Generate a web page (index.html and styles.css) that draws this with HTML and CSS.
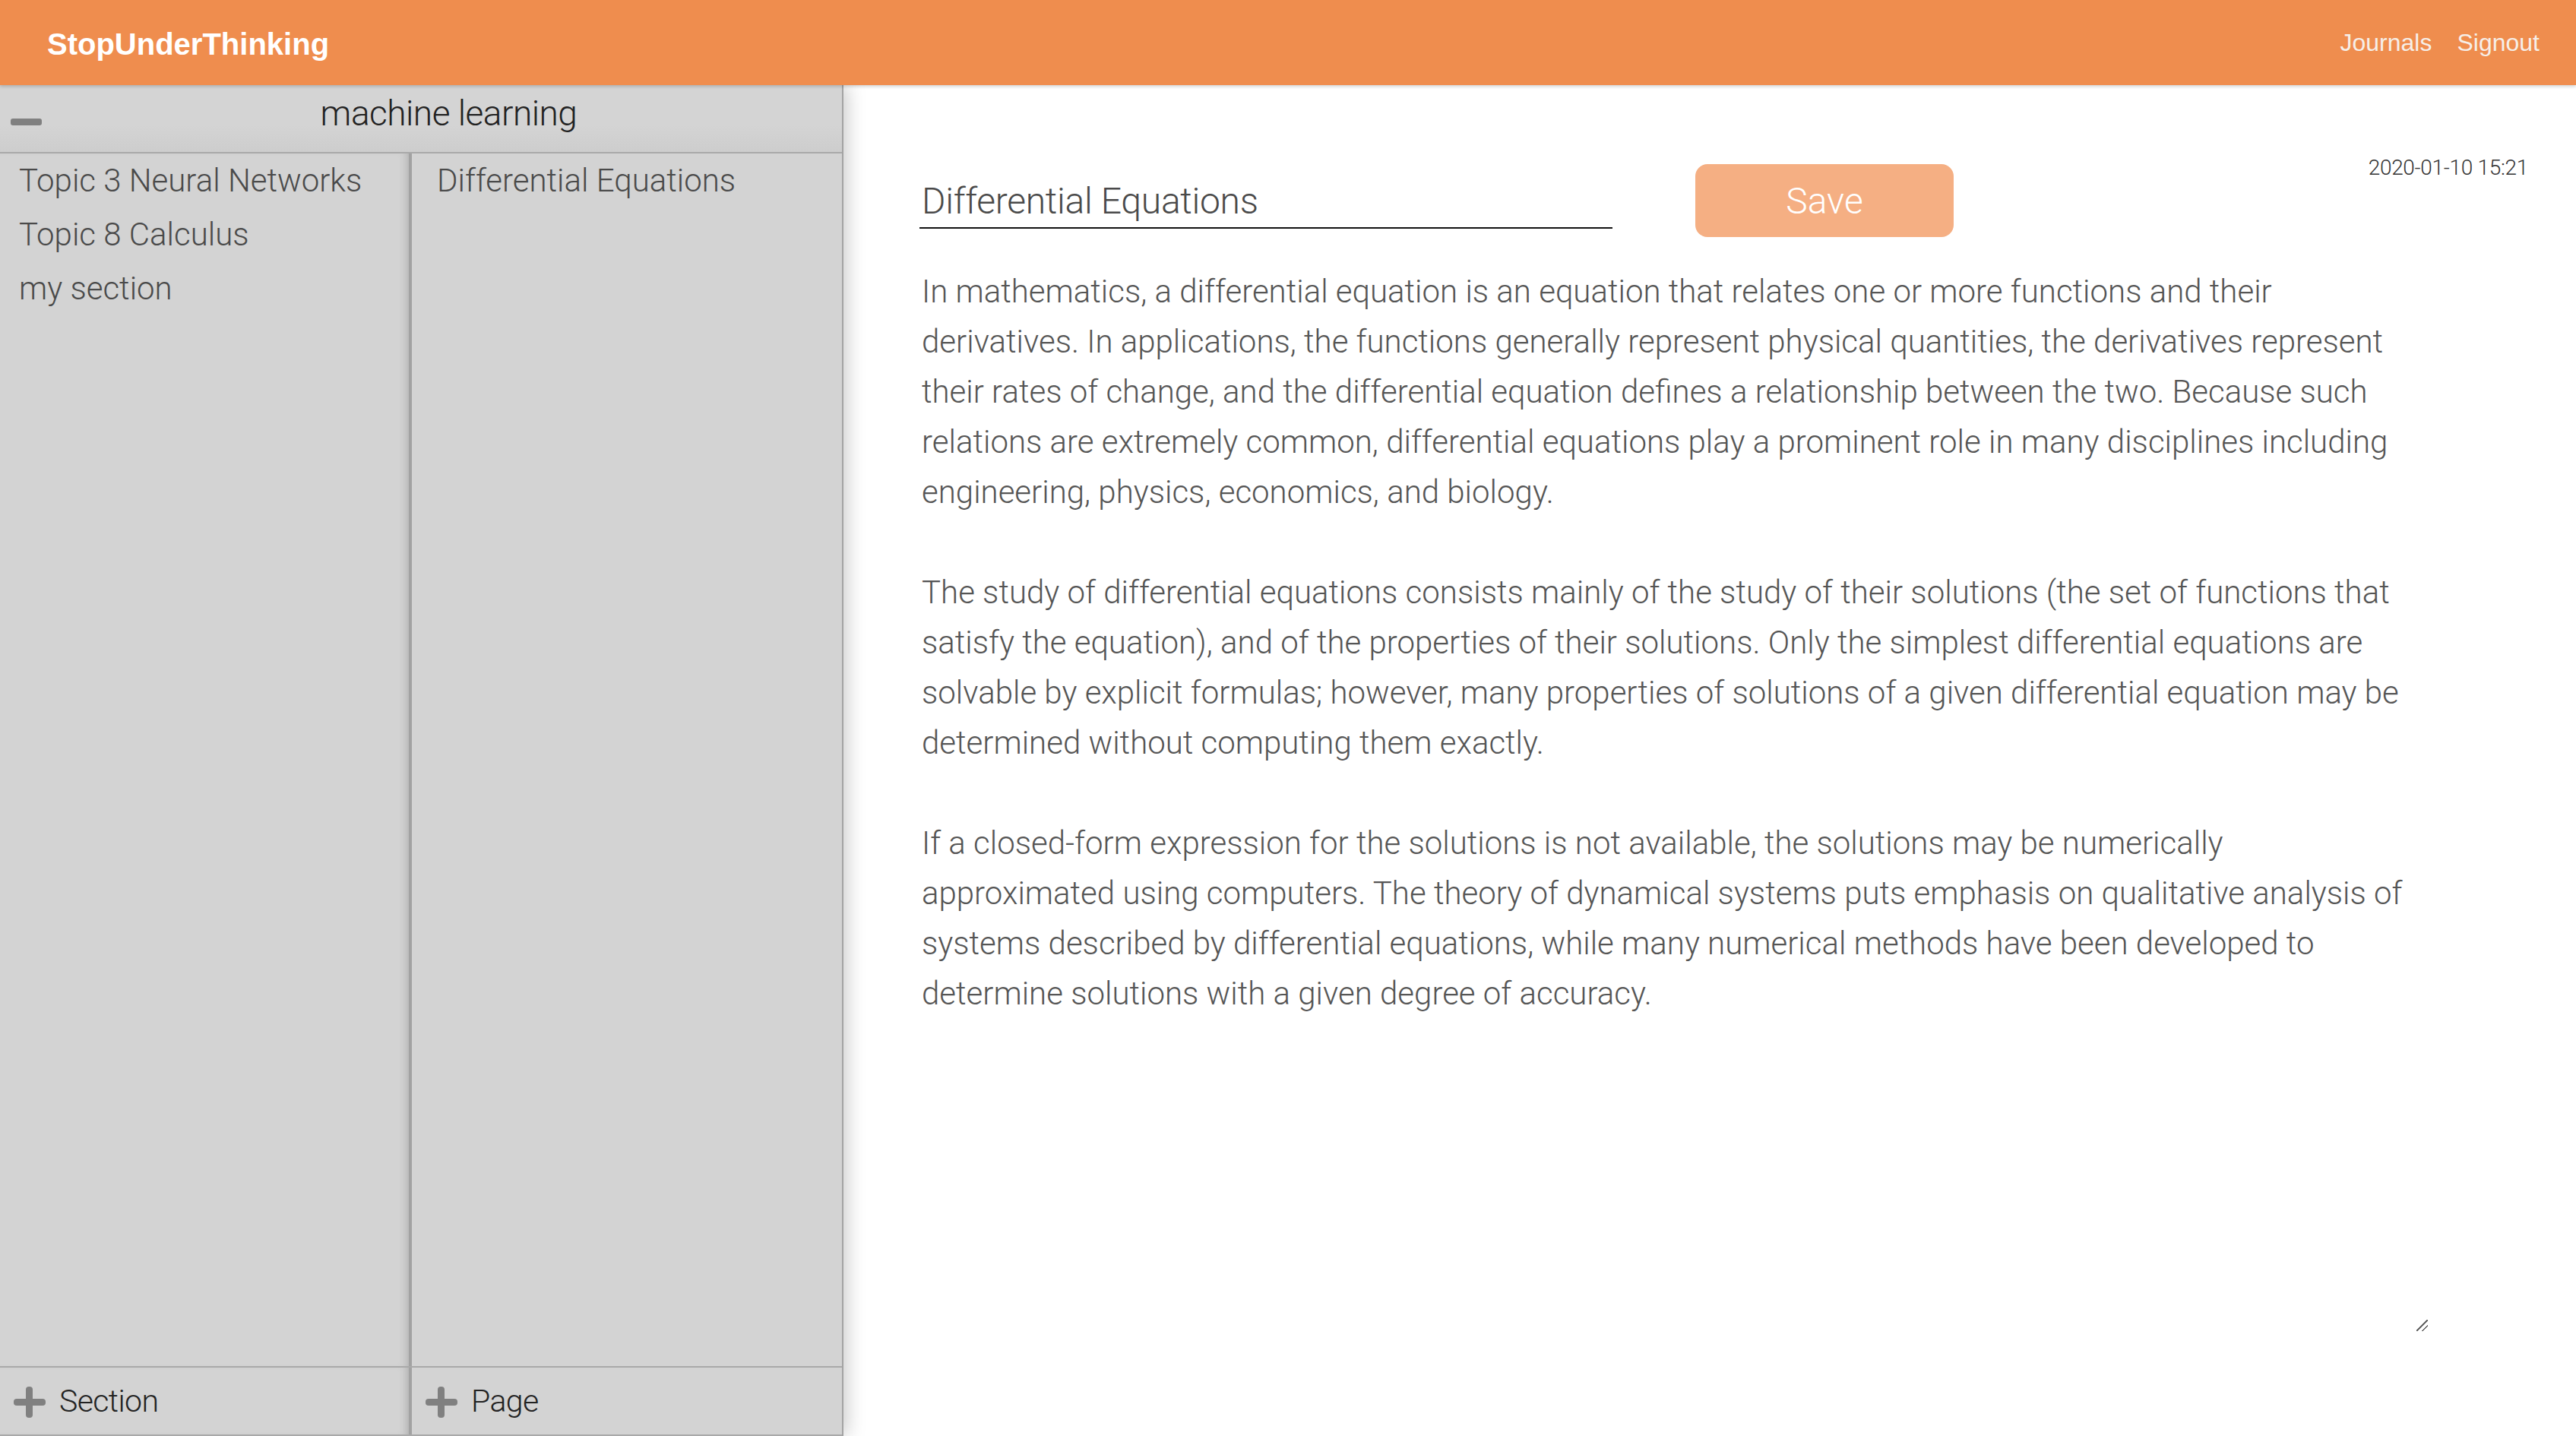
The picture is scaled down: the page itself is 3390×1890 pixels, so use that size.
FILE: index.html
```html
<!DOCTYPE html>
<html lang="en">
<head>
<meta charset="utf-8">
<title>StopUnderThinking</title>
<link rel="stylesheet" href="styles.css">
</head>
<body>
<header class="topbar">
  <div class="logo">StopUnderThinking</div>
  <nav class="nav">
    <a class="nav-link" href="#">Journals</a>
    <a class="nav-link" href="#">Signout</a>
  </nav>
</header>
<div class="app">
  <aside class="sidebar">
    <div class="sidebar-head">
      <span class="minus"></span>
      <span class="journal-title">machine learning</span>
    </div>
    <div class="cols">
      <ul class="col col-sections">
        <li class="item">Topic 3 Neural Networks</li>
        <li class="item">Topic 8 Calculus</li>
        <li class="item">my section</li>
      </ul>
      <ul class="col col-pages">
        <li class="item">Differential Equations</li>
      </ul>
    </div>
    <div class="adds">
      <button class="add add-section"><span class="plus"></span><span class="add-label">Section</span></button>
      <button class="add add-page"><span class="plus"></span><span class="add-label">Page</span></button>
    </div>
  </aside>
  <main class="editor">
    <div class="title-row">
      <input class="title-input" type="text" value="Differential Equations">
      <button class="save">Save</button>
      <div class="date">2020-01-10 15:21</div>
    </div>
    <textarea class="body-text" spellcheck="false">In mathematics, a differential equation is an equation that relates one or more functions and their
derivatives. In applications, the functions generally represent physical quantities, the derivatives represent
their rates of change, and the differential equation defines a relationship between the two. Because such
relations are extremely common, differential equations play a prominent role in many disciplines including
engineering, physics, economics, and biology.

The study of differential equations consists mainly of the study of their solutions (the set of functions that
satisfy the equation), and of the properties of their solutions. Only the simplest differential equations are
solvable by explicit formulas; however, many properties of solutions of a given differential equation may be
determined without computing them exactly.

If a closed-form expression for the solutions is not available, the solutions may be numerically
approximated using computers. The theory of dynamical systems puts emphasis on qualitative analysis of
systems described by differential equations, while many numerical methods have been developed to
determine solutions with a given degree of accuracy.</textarea>
  </main>
</div>
</body>
</html>
```
FILE: styles.css
```css
* { box-sizing: border-box; }
html, body { margin: 0; padding: 0; height: 100%; }
body {
  display: flex;
  flex-direction: column;
  height: 1890px;
  overflow: hidden;
  font-family: Roboto, "Liberation Sans", sans-serif;
  font-weight: 300;
  background: #fff;
}
.topbar {
  height: 112px;
  flex: 0 0 112px;
  background: #ef8d4e;
  display: flex;
  align-items: center;
  justify-content: space-between;
  padding: 0 48px 0 62px;
  box-shadow: 0 2px 4px rgba(0,0,0,0.18);
  position: relative;
  z-index: 3;
}
.logo {
  font-family: "Liberation Sans", Arial, sans-serif;
  font-weight: 700;
  font-size: 40px;
  color: #fff;
  letter-spacing: 0;
  margin-top: 4px;
}
.nav { display: flex; gap: 33px; margin-top: 0; }
.nav-link {
  font-family: "Liberation Sans", Arial, sans-serif;
  font-weight: 400;
  font-size: 32px;
  color: #f6efe9;
  text-decoration: none;
}
.app { flex: 1; display: flex; min-height: 0; }
.sidebar {
  width: 1110px;
  flex: 0 0 1110px;
  background: #d3d3d3;
  display: flex;
  flex-direction: column;
  border-right: 2px solid #a3a3a3;
  box-shadow: 4px 0 24px rgba(0,0,0,0.22);
  position: relative;
  z-index: 2;
}
.sidebar-head {
  height: 90px;
  flex: 0 0 90px;
  display: flex;
  align-items: center;
  border-bottom: 2px solid #a9a9a9;
  background: linear-gradient(#d4d4d4 60%, #cdcdcd);
}
.minus {
  width: 41px;
  height: 9px;
  border-radius: 3px;
  background: #808080;
  margin-left: 14px;
  margin-top: 8px;
}
.journal-title {
  flex: 1;
  text-align: center;
  font-size: 46px;
  color: #222;
  padding-left: 18px;
  padding-right: 0;
  margin-top: -14px;
  letter-spacing: -0.5px;
}
.cols { flex: 1; display: flex; min-height: 0; }
.col {
  list-style: none;
  margin: 0;
  padding: 0;
}
.col-sections {
  width: 538px;
  flex: 0 0 538px;
  padding-left: 25px;
  box-shadow: inset -10px 0 12px -8px rgba(0,0,0,0.18);
}
.col-pages {
  flex: 1;
  border-left: 4px solid #a2a2a2;
  padding-left: 33px;
}
.item {
  font-size: 42px;
  line-height: 71px;
  color: #4a4a4a;
  letter-spacing: 0;
  white-space: nowrap;
}
.adds {
  height: 92px;
  flex: 0 0 92px;
  display: flex;
  border-top: 2px solid #a9a9a9;
  border-bottom: 2px solid #a9a9a9;
}
.add {
  display: flex;
  align-items: center;
  border: 0;
  background: #d3d3d3;
  padding: 0 0 0 18px;
  margin: 0;
  font-family: inherit;
  font-weight: 300;
  font-size: 41px;
  color: #222;
  cursor: pointer;
}
.add-section {
  width: 538px;
  flex: 0 0 538px;
  box-shadow: inset -10px 0 12px -8px rgba(0,0,0,0.2);
}
.add-page {
  flex: 1;
  border-left: 4px solid #a2a2a2;
  padding-left: 18px;
}
.plus {
  position: relative;
  width: 42px;
  height: 41px;
  flex: 0 0 42px;
  margin-right: 18px;
  margin-top: 2px;
}
.plus::before, .plus::after {
  content: "";
  position: absolute;
  background: #808080;
  border-radius: 4px;
}
.plus::before { left: 0; right: 0; top: 16px; height: 9px; }
.plus::after { top: 0; bottom: 0; left: 16px; width: 9px; }
.add-label { letter-spacing: -0.6px; }
.editor {
  flex: 1;
  display: flex;
  flex-direction: column;
  padding: 92px 0 0 100px;
  min-width: 0;
}
.title-row {
  display: flex;
  align-items: flex-start;
}
.title-input {
  width: 912px;
  height: 71px;
  margin-top: 26px;
  border: 0;
  border-bottom: 2px solid #111;
  padding: 0 0 0 3px;
  font-family: inherit;
  font-weight: 300;
  font-size: 48px;
  color: #4a4a4a;
  background: transparent;
  outline: none;
  letter-spacing: -0.3px;
}
.save {
  width: 340px;
  height: 96px;
  margin: 12px 0 0 109px;
  border: 0;
  border-radius: 16px;
  background: #f5af83;
  color: #fff;
  font-family: inherit;
  font-weight: 300;
  font-size: 48px;
  padding: 0;
}
.date {
  margin-left: auto;
  margin-right: 63px;
  font-size: 28px;
  color: #333;
  letter-spacing: -0.3px;
}
.body-text {
  margin-top: 39px;
  width: 1985px;
  height: 1401px;
  border: 0;
  outline: none;
  padding: 0 0 0 3px;
  font-family: inherit;
  font-weight: 300;
  font-size: 42px;
  line-height: 66px;
  color: #555;
  white-space: pre;
  overflow: hidden;
  resize: both;
  background: transparent;
  letter-spacing: 0;
}
.body-text::-webkit-resizer {
  background: linear-gradient(135deg, transparent 0 46%, #666 46% 54%, transparent 54% 70%, #666 70% 78%, transparent 78%);
}
```
